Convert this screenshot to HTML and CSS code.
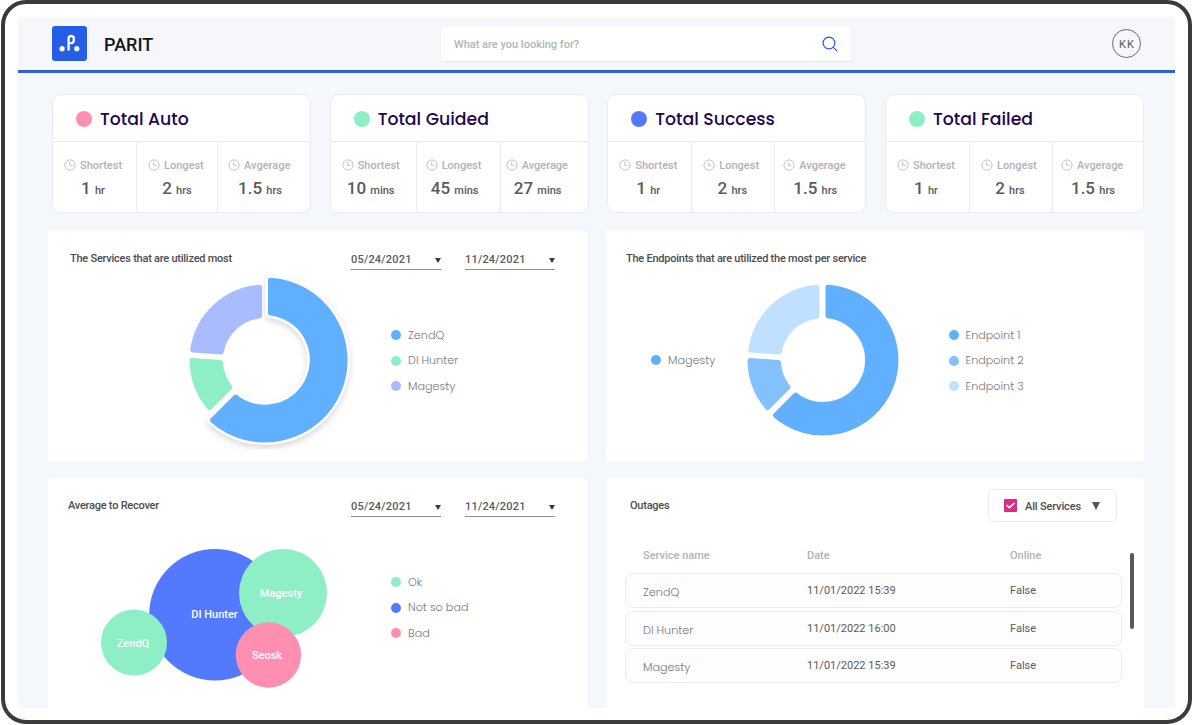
FILE: index.html
```html
<!DOCTYPE html>
<html lang="en">
<head>
    <meta charset="UTF-8">
    <meta name="viewport" content="width=device-width, initial-scale=1.0">
    <title>PARIT</title>
    <link rel="stylesheet" href="styles.css">
</head>
<body>

<svg class="defs">
    <symbol id="clock" viewBox="0 0 12 12">
        <circle cx="6" cy="6" r="5.1"/>
        <path d="M5.7 2.8V6.3H8.6"/>
    </symbol>
</svg>

<div class="frame">
    <div class="screen">
        <header class="header">
            <svg class="logo" viewBox="0 0 35 35">
                <rect width="35" height="35" rx="3" fill="#245ee5"/>
                <circle cx="10.1" cy="22.7" r="2.6" fill="#fff"/>
                <circle cx="24.8" cy="22.7" r="2.6" fill="#fff"/>
                <path d="M16.6 23.8V12.6a2.6 2.6 0 0 1 5.2 0v2a2.6 2.6 0 0 1-3 2.5" fill="none" stroke="#fff" stroke-width="2.3" stroke-linecap="round"/>
            </svg>
            <h1>PARIT</h1>
            <div class="search">
                <span>What are you looking for?</span>
                <svg viewBox="0 0 16 16">
                    <circle cx="7" cy="7" r="5.9"/>
                    <path d="M11.3 11.3L15.2 15.2"/>
                </svg>
            </div>
            <div class="avatar">KK</div>
        </header>

        <main class="content">
            <section class="cards">
                <div class="card">
                    <h2><i class="dot pink"></i>Total Auto</h2>
                    <div class="stats cols-auto">
                        <div class="stat"><div class="label"><svg><use href="#clock"/></svg>Shortest</div><div class="value">1 <small>hr</small></div></div>
                        <div class="stat"><div class="label"><svg><use href="#clock"/></svg>Longest</div><div class="value">2 <small>hrs</small></div></div>
                        <div class="stat"><div class="label"><svg><use href="#clock"/></svg>Avgerage</div><div class="value">1.5 <small>hrs</small></div></div>
                    </div>
                </div>
                <div class="card">
                    <h2><i class="dot green"></i>Total Guided</h2>
                    <div class="stats cols-guided">
                        <div class="stat"><div class="label"><svg><use href="#clock"/></svg>Shortest</div><div class="value">10 <small>mins</small></div></div>
                        <div class="stat"><div class="label"><svg><use href="#clock"/></svg>Longest</div><div class="value">45 <small>mins</small></div></div>
                        <div class="stat"><div class="label"><svg><use href="#clock"/></svg>Avgerage</div><div class="value">27 <small>mins</small></div></div>
                    </div>
                </div>
                <div class="card">
                    <h2><i class="dot blue"></i>Total Success</h2>
                    <div class="stats">
                        <div class="stat"><div class="label"><svg><use href="#clock"/></svg>Shortest</div><div class="value">1 <small>hr</small></div></div>
                        <div class="stat"><div class="label"><svg><use href="#clock"/></svg>Longest</div><div class="value">2 <small>hrs</small></div></div>
                        <div class="stat"><div class="label"><svg><use href="#clock"/></svg>Avgerage</div><div class="value">1.5 <small>hrs</small></div></div>
                    </div>
                </div>
                <div class="card">
                    <h2><i class="dot green"></i>Total Failed</h2>
                    <div class="stats">
                        <div class="stat"><div class="label"><svg><use href="#clock"/></svg>Shortest</div><div class="value">1 <small>hr</small></div></div>
                        <div class="stat"><div class="label"><svg><use href="#clock"/></svg>Longest</div><div class="value">2 <small>hrs</small></div></div>
                        <div class="stat"><div class="label"><svg><use href="#clock"/></svg>Avgerage</div><div class="value">1.5 <small>hrs</small></div></div>
                    </div>
                </div>
            </section>

            <section class="panels">
                <div class="panel services">
                    <div class="panel-head">
                        <h3>The Services that are utilized most</h3>
                        <div class="dates">
                            <div class="date">05/24/2021<i class="caret"></i></div>
                            <div class="date">11/24/2021<i class="caret"></i></div>
                        </div>
                    </div>
                    <div class="panel-body">
                        <svg class="donut" viewBox="-90 -90 180 180">
                            <g class="slices">
                                <path fill="#8eeec5" stroke="#8eeec5" d="M-55.4 47.6A73 73 0 0 1-73 .6L-44.5 2.4A44.5 44.5 0 0 0-35.1 27.3Z"/>
                                <path fill="#a9bcff" stroke="#a9bcff" d="M-72.3-10.1A73 73 0 0 1-5.5-72.8L-5.5-44.1A44.5 44.5 0 0 0-43.8-8Z"/>
                                <path class="raised" d="M5.4-79.8A80 80 0 1 1-52.5 60.3L-29.3 37.1A47.3 47.3 0 1 0 5.4-47Z"/>
                                <path fill="#61b0ff" stroke="#61b0ff" d="M5.4-79.8A80 80 0 1 1-52.5 60.3L-29.3 37.1A47.3 47.3 0 1 0 5.4-47Z"/>
                            </g>
                        </svg>
                        <ul class="legend">
                            <li><i class="dot sky"></i>ZendQ</li>
                            <li><i class="dot green"></i>DI Hunter</li>
                            <li><i class="dot lilac"></i>Magesty</li>
                        </ul>
                    </div>
                </div>

                <div class="panel endpoints">
                    <div class="panel-head">
                        <h3>The Endpoints that are utilized the most per service</h3>
                    </div>
                    <div class="panel-body">
                        <ul class="legend source">
                            <li><i class="dot sky"></i>Magesty</li>
                        </ul>
                        <svg class="donut" viewBox="-90 -90 180 180">
                            <g class="slices">
                                <path fill="#83c1ff" stroke="#83c1ff" d="M-55.4 47.6A73 73 0 0 1-73 .6L-44.5 2.4A44.5 44.5 0 0 0-35.1 27.3Z"/>
                                <path fill="#bfe0ff" stroke="#bfe0ff" d="M-72.3-10.1A73 73 0 0 1-6-72.8L-6-44.1A44.5 44.5 0 0 0-43.8-8Z"/>
                                <path fill="#61b0ff" stroke="#61b0ff" d="M5-72.8A73 73 0 1 1-47.6 55.4L-27.3 35.1A44.5 44.5 0 1 0 5-44.2Z"/>
                            </g>
                        </svg>
                        <ul class="legend">
                            <li><i class="dot sky"></i>Endpoint 1</li>
                            <li><i class="dot sky-2"></i>Endpoint 2</li>
                            <li><i class="dot sky-3"></i>Endpoint 3</li>
                        </ul>
                    </div>
                </div>

                <div class="panel recover">
                    <div class="panel-head">
                        <h3>Average to Recover</h3>
                        <div class="dates">
                            <div class="date">05/24/2021<i class="caret"></i></div>
                            <div class="date">11/24/2021<i class="caret"></i></div>
                        </div>
                    </div>
                    <div class="panel-body">
                        <svg class="bubbles" viewBox="0 0 230 144">
                            <circle cx="115" cy="70.8" r="65.8" fill="#5379ff"/>
                            <circle cx="34" cy="98.5" r="33" fill="#8eeec5"/>
                            <circle cx="183" cy="49" r="44" fill="#8eeec5"/>
                            <circle cx="168.4" cy="111" r="32.7" fill="#ff8fb1"/>
                            <text x="114.5" y="74">DI Hunter</text>
                            <text x="33" y="103">ZendQ</text>
                            <text x="181" y="53">Magesty</text>
                            <text x="167" y="115">Seosk</text>
                        </svg>
                        <ul class="legend">
                            <li><i class="dot green"></i>Ok</li>
                            <li><i class="dot blue"></i>Not so bad</li>
                            <li><i class="dot pink"></i>Bad</li>
                        </ul>
                    </div>
                </div>

                <div class="panel outages">
                    <div class="panel-head">
                        <h3>Outages</h3>
                        <div class="dropdown">
                            <svg class="check" viewBox="0 0 13 13">
                                <rect width="13" height="13" rx="1" fill="#dc2a87"/>
                                <path d="M2.6 6.2L5.3 8.6L10.6 4" fill="none" stroke="#fff" stroke-width="1.6"/>
                            </svg>
                            <span>All Services</span>
                            <i class="caret big"></i>
                        </div>
                    </div>
                    <div class="table-wrap">
                        <div class="table">
                            <div class="row head"><span>Service name</span><span>Date</span><span>Online</span></div>
                            <div class="row"><span class="name">ZendQ</span><span>11/01/2022 15:39</span><span>False</span></div>
                            <div class="row"><span class="name">DI Hunter</span><span>11/01/2022 16:00</span><span>False</span></div>
                            <div class="row"><span class="name">Magesty</span><span>11/01/2022 15:39</span><span>False</span></div>
                        </div>
                        <div class="scrollbar"></div>
                    </div>
                </div>
            </section>
        </main>
    </div>
</div>

</body>
</html>
```
FILE: styles.css
```css
* {
    box-sizing: border-box;
}
body {
    margin: 0;
    background-color: #fff;
    font-family: Roboto, sans-serif;
    color: #5a5a5c;
    overflow: hidden;
}
h1, h2, h3, ul {
    margin: 0;
    padding: 0;
}
.defs {
    display: none;
}
.frame {
    width: 1191px;
    height: 724px;
    margin-left: 1px;
    padding: 13px 13px 0;
    border: 4px solid #3c3b3c;
    border-radius: 25px;
}
.screen {
    width: 1157px;
    height: 691px;
    background-color: #f4f7fb;
    border-radius: 3px;
    overflow: hidden;
}

/* header */
.header {
    display: flex;
    align-items: center;
    height: 56px;
    padding: 0 34px;
    border-bottom: 3px solid #2f62d8;
    background-color: #f5f7fb;
}
.logo {
    width: 35px;
    height: 35px;
}
.header h1 {
    width: 337px;
    margin-left: 17px;
    padding-top: 1px;
    font-size: 18px;
    font-weight: 500;
    color: #151515;
}
.search {
    display: flex;
    align-items: center;
    justify-content: space-between;
    width: 410px;
    height: 34px;
    padding: 0 13px;
    background-color: #fff;
    border-radius: 3px;
    box-shadow: 0 1px 2px rgba(0, 0, 0, 0.07);
    font-size: 11px;
    font-weight: 500;
    color: #b3b4b8;
}
.search span {
    padding-top: 2px;
}
.search svg {
    width: 16px;
    height: 16px;
    fill: none;
    stroke: #245ed8;
    stroke-width: 1.2;
}
.avatar {
    width: 29px;
    height: 29px;
    margin-left: auto;
    border: 1px solid #6a6a6c;
    border-radius: 50%;
    font-size: 11px;
    line-height: 29px;
    letter-spacing: 1px;
    text-indent: 1px;
    text-align: center;
}

.content {
    padding: 21px 30px 0;
}

/* dots */
.dot {
    flex: none;
    width: 10px;
    height: 10px;
    border-radius: 50%;
}
.pink { background-color: #ff8fb1; }
.green { background-color: #8eeec5; }
.blue { background-color: #5379ff; }
.lilac { background-color: #a9bcff; }
.sky { background-color: #61b0ff; }
.sky-2 { background-color: #83c1ff; }
.sky-3 { background-color: #bfe0ff; }

/* summary cards */
.cards {
    display: grid;
    grid-template-columns: repeat(4, 259px);
    justify-content: space-between;
    width: 1092px;
    margin-left: 4px;
}
.card {
    height: 119px;
    background-color: #fff;
    border: 1px solid #ececee;
    border-radius: 9px;
}
.card h2 {
    display: flex;
    align-items: center;
    height: 47px;
    padding: 1px 0 0 23px;
    border-bottom: 1px solid #ececee;
    font-family: Poppins, Inter, sans-serif;
    font-size: 17.3px;
    font-weight: 500;
    color: #22054f;
}
.card h2 .dot {
    width: 16px;
    height: 16px;
    margin-right: 8px;
}
.stats {
    display: grid;
    grid-template-columns: 84px 83px 1fr;
    height: 70px;
}
.cols-auto {
    grid-template-columns: 84px 81px 1fr;
}
.cols-guided {
    grid-template-columns: 86px 84px 1fr;
}
.stat {
    padding: 15px 0 0 11px;
    border-right: 1px solid #ececee;
}
.stat:last-child {
    padding-left: 8px;
    border-right: none;
}
.cols-auto .stat:last-child {
    padding-left: 10px;
}
.cols-guided .stat:last-child {
    padding-left: 5px;
}
.cols-guided .stat:nth-child(2) {
    padding-left: 9px;
}
.label {
    display: flex;
    align-items: center;
    height: 16px;
    font-size: 11px;
    font-weight: 500;
    color: #b1b2b6;
}
.label svg {
    width: 12px;
    height: 12px;
    margin-right: 4px;
    fill: none;
    stroke: #bcbdc1;
    stroke-width: 0.9;
}
.value {
    width: 58px;
    margin-top: 5px;
    font-size: 17px;
    font-weight: 500;
    line-height: 20px;
    text-align: center;
    white-space: nowrap;
}
.stat:last-child .value {
    width: 64px;
}
.value small {
    font-size: 11px;
}

/* panels */
.panels {
    display: grid;
    grid-template-columns: 539px 538px;
    grid-template-rows: 230px 230px;
    gap: 17px 19px;
    margin-top: 18px;
}
.panel {
    background-color: #fff;
    border-radius: 2px;
}
.panel-head {
    display: flex;
    justify-content: space-between;
    height: 44px;
    padding: 0 32px 0 20px;
}
.panel-head h3 {
    margin-top: 20px;
    font-size: 11px;
    font-weight: 500;
    line-height: 15px;
    letter-spacing: -0.24px;
    color: #4c4c50;
}
.services .panel-head {
    padding-left: 22px;
}
.dates {
    display: flex;
    gap: 24px;
    margin-top: 20px;
}
.date {
    display: flex;
    align-items: center;
    justify-content: space-between;
    width: 90px;
    height: 19px;
    padding-bottom: 2px;
    border-bottom: 1px solid #8e8e90;
    font-size: 11px;
    font-weight: 500;
    letter-spacing: 0.2px;
}
.caret {
    border: 3.5px solid transparent;
    border-top: 5px solid #3a3a3c;
    border-bottom: 0;
}
.date .caret {
    margin-top: 2px;
}
.caret.big {
    border-width: 8px 4.5px 0;
    border-top-color: #555;
}
.panel-body {
    display: flex;
}
.donut {
    width: 180px;
    height: 180px;
    margin-left: 127px;
    margin-top: -5px;
}
.slices {
    stroke-width: 5;
    stroke-linejoin: round;
}
.raised {
    fill: #fff;
    stroke: #fff;
    stroke-width: 10;
    filter: drop-shadow(0 3px 3px rgba(0, 0, 0, 0.15));
}
.legend {
    display: flex;
    flex-direction: column;
    gap: 7.6px;
    margin: 51px 0 0 36px;
    list-style: none;
    font-family: Poppins, Inter, sans-serif;
    font-size: 11.2px;
    font-weight: 300;
    color: #77777b;
}
.legend li {
    display: flex;
    align-items: center;
    gap: 7px;
    height: 18px;
}
.endpoints .donut {
    margin-left: 16.5px;
}
.endpoints .source {
    width: 65px;
    margin: 76px 0 0 45px;
}

.bubbles {
    width: 230px;
    height: 144px;
    margin-top: 22px;
    margin-left: 52px;
}
.bubbles text {
    font-size: 11px;
    font-weight: 500;
    text-anchor: middle;
    fill: #fff;
}
.recover .legend {
    margin-left: 61px;
}

/* outages */
.outages .panel-head {
    padding: 0 27px 0 24px;
}
.dropdown {
    display: flex;
    align-items: center;
    width: 129px;
    height: 33px;
    margin-top: 11px;
    padding: 0 16px 0 15px;
    border: 1px solid #ececee;
    border-radius: 6px;
    font-size: 11px;
    font-weight: 500;
    letter-spacing: -0.15px;
    color: #4c4c50;
}
.dropdown span {
    padding-top: 1px;
}
.check {
    width: 13px;
    height: 13px;
    margin-right: 8px;
}
.dropdown .caret {
    margin-left: auto;
}
.table-wrap {
    display: flex;
    margin: 22px 0 0 19px;
}
.table {
    width: 497px;
}
.row {
    display: grid;
    grid-template-columns: 164px 203px 1fr;
    align-items: center;
    height: 35px;
    margin-bottom: 2.5px;
    padding-left: 17px;
    border: 1px solid #ececee;
    border-radius: 7px;
    background-color: #fdfdfd;
    font-size: 11px;
}
.row.head {
    height: 22px;
    margin-bottom: 7px;
    border-color: transparent;
    background: none;
    font-weight: 500;
    color: #b1b2b6;
}
.row .name {
    padding-top: 4px;
    font-family: Poppins, Inter, sans-serif;
    font-size: 11.2px;
    font-weight: 300;
    color: #77777b;
}
.scrollbar {
    width: 4px;
    height: 76px;
    margin: 9px 0 0 8px;
    border-radius: 2px;
    background-color: #58585a;
}
```
